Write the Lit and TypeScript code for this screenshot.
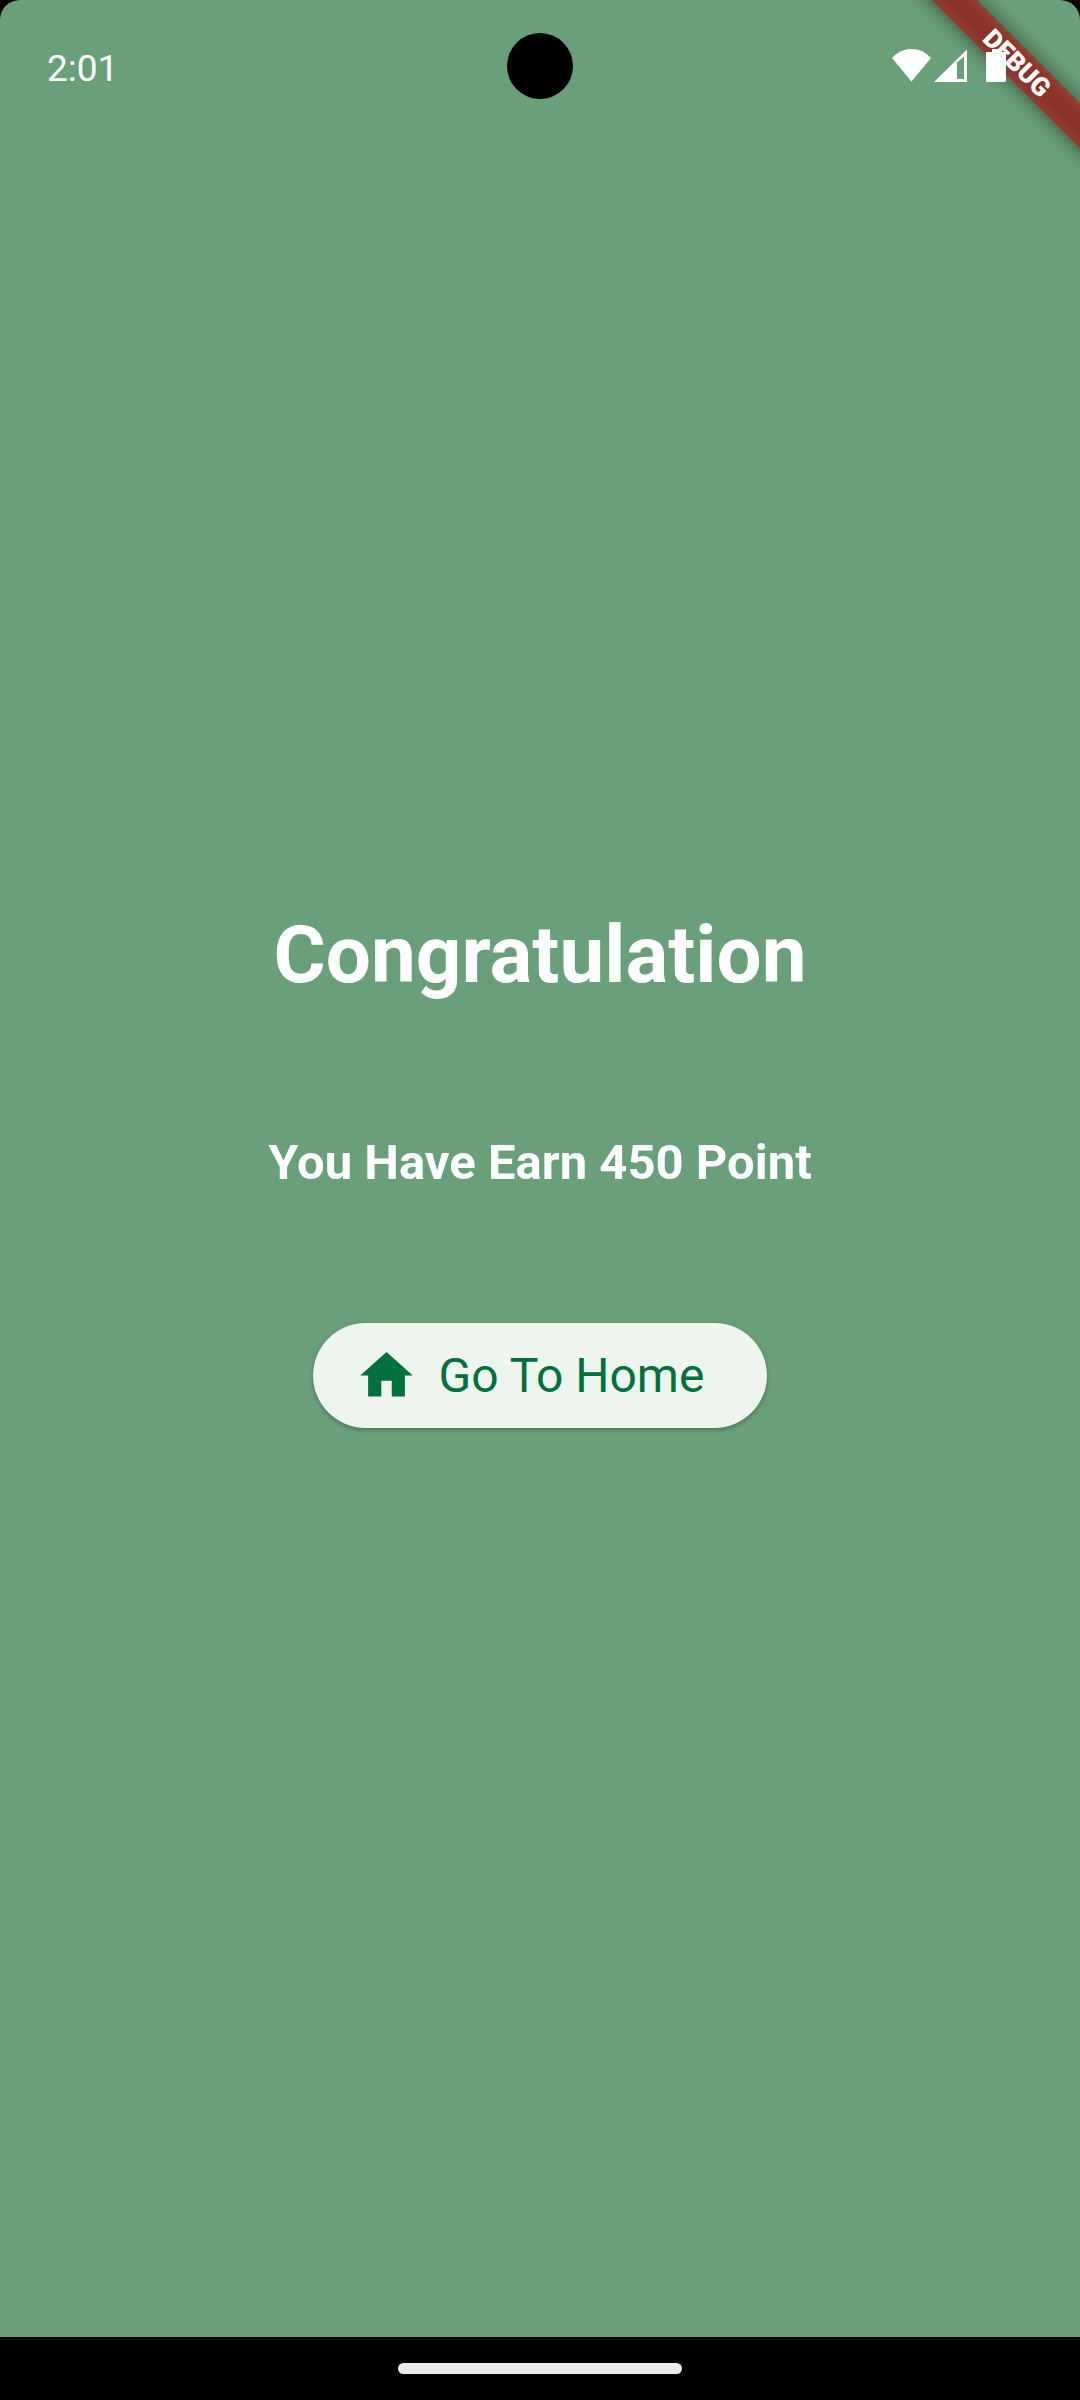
import { LitElement, html, css } from "lit";
import { customElement, property } from "lit/decorators.js";

@customElement("status-bar")
class StatusBar extends LitElement {
  @property() time = "";

  static styles = css`
    :host {
      display: grid;
      grid-template-columns: 1fr auto 1fr;
      align-items: center;
      height: 132px;
      padding: 0 74px 0 47px;
      color: #fff;
      font-size: 37px;
      line-height: 44px;
    }
    .time {
      padding-top: 6px;
    }
    .camera {
      width: 66px;
      height: 66px;
      margin-left: 27px;
      border-radius: 50%;
      background: #000;
    }
    .icons {
      display: flex;
      justify-content: flex-end;
      gap: 3px;
      padding-bottom: 1px;
    }
    .icons svg {
      display: block;
      fill: currentColor;
    }
    .battery {
      margin-left: 16px;
    }
  `;

  render() {
    return html`
      <span class="time">${this.time}</span>
      <span class="camera"></span>
      <span class="icons">
        <svg width="39" height="33" viewBox="0 0 39 33" aria-hidden="true">
          <path d="M0 9Q8 0 19.500 0T39 9L19.500 32.500Z" />
        </svg>
        <svg width="33" height="33" viewBox="0 0 33 33" aria-hidden="true">
          <path fill-rule="evenodd" d="M0 33L33 0.500V33ZM23 13.500V30H30V7.500Z" />
        </svg>
        <svg class="battery" width="20" height="33" viewBox="0 0 20 33" aria-hidden="true">
          <path d="M6 0H14V3H19L20 4V32L19 33H0V3H6Z" />
        </svg>
      </span>
    `;
  }
}

@customElement("debug-banner")
class DebugBanner extends LitElement {
  static styles = css`
    :host {
      display: block;
      overflow: hidden;
      width: 240px;
      height: 240px;
    }
    .ribbon {
      position: absolute;
      top: 47px;
      right: -147px;
      width: 420px;
      height: 32px;
      transform: rotate(45deg);
    }
    .shadow,
    .label {
      position: absolute;
      inset: 0;
    }
    .shadow {
      background: rgba(0, 0, 0, 0.5);
      filter: blur(10px);
    }
    .label {
      background: rgba(183, 28, 28, 0.63);
      color: #fff;
      font-size: 26px;
      font-weight: 900;
      line-height: 32px;
      text-align: center;
    }
  `;

  render() {
    return html`
      <div class="ribbon">
        <div class="shadow"></div>
        <div class="label">DEBUG</div>
      </div>
    `;
  }
}

@customElement("app-root")
class AppRoot extends LitElement {
  @property({ type: Number }) points = 450;

  static styles = css`
    :host {
      display: flex;
      flex-direction: column;
      min-height: 100vh;
      background: #000;
      font-family: Roboto, "Liberation Sans", sans-serif;
    }
    .screen {
      position: relative;
      flex: 1;
      display: flex;
      overflow: hidden;
      border-radius: 20px 20px 0 0;
      background: #699f79;
    }
    .banner {
      position: absolute;
      top: 0;
      right: 0;
    }
    .status {
      position: absolute;
      top: 0;
      left: 0;
      right: 0;
    }
    .result {
      flex: 1;
      display: flex;
      flex-direction: column;
      align-items: center;
      justify-content: center;
      gap: 132px;
      padding-bottom: 1px;
      color: #fff;
      text-align: center;
    }
    .title,
    .score {
      margin: 0;
      font-weight: 700;
    }
    .title {
      font-size: 80px;
      line-height: 94px;
    }
    .score {
      font-size: 49px;
      line-height: 57px;
    }
    .home {
      display: flex;
      align-items: center;
      gap: 21px;
      height: 105px;
      padding: 0 63px 0 42px;
      border: 0;
      border-radius: 53px;
      background: #eef5ee;
      box-shadow: 0 2px 4px rgba(0, 0, 0, 0.28);
      color: #00703c;
      font-family: inherit;
      font-size: 48px;
      line-height: 56px;
      cursor: pointer;
    }
    .home-icon {
      width: 63px;
      height: 63px;
      fill: currentColor;
    }
    .navigation {
      display: flex;
      align-items: center;
      justify-content: center;
      height: 63px;
    }
    .handle {
      width: 284px;
      height: 11px;
      border-radius: 6px;
      background: #ebebeb;
    }
  `;

  render() {
    return html`
      <div class="screen">
        <main class="result">
          <h1 class="title">Congratulation</h1>
          <p class="score">You Have Earn ${this.points} Point</p>
          <button class="home" type="button">
            <svg class="home-icon" viewBox="0 0 24 24" aria-hidden="true">
              <path d="M10 20v-6h4v6h5v-8h3L12 3 2 12h3v8z" />
            </svg>
            <span>Go To Home</span>
          </button>
        </main>
        <debug-banner class="banner"></debug-banner>
        <status-bar class="status" time="2:01"></status-bar>
      </div>
      <div class="navigation"><span class="handle"></span></div>
    `;
  }
}
